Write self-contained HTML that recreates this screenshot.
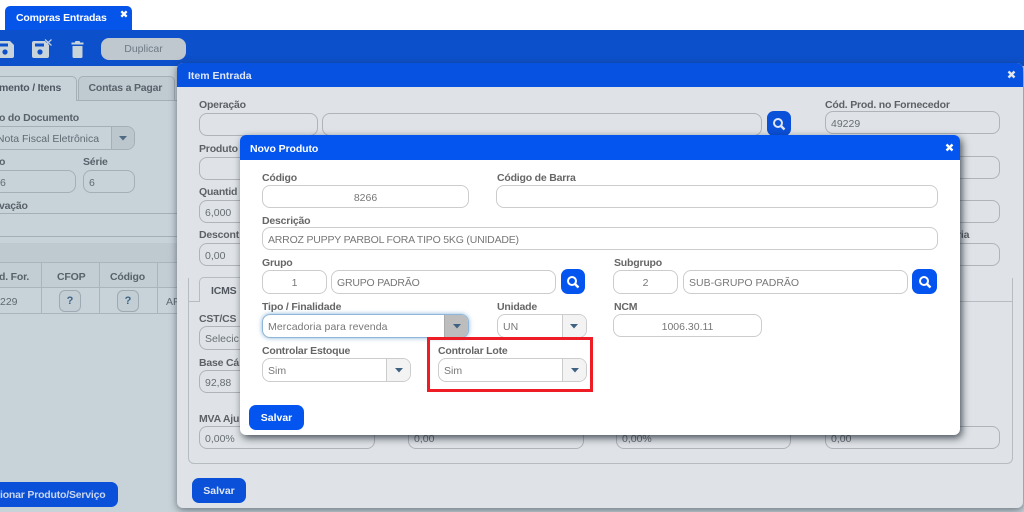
<!DOCTYPE html>
<html lang="pt"><head><meta charset="utf-8"><title>Compras Entradas</title>
<style>
*{box-sizing:border-box}
html,body{margin:0;padding:0;width:1024px;height:512px;overflow:hidden;background:#fff;font-family:"Liberation Sans",sans-serif}
div,svg{position:absolute}
#root{left:0;top:0;width:1024px;height:512px;overflow:hidden;filter:blur(.3px)}
.l{font-weight:bold;font-size:10.5px;letter-spacing:-.2px;line-height:12px;white-space:nowrap;transform:translateY(1px)}
.i{border:1px solid;border-radius:8px;font-size:10.5px;line-height:21px;padding-left:5px;padding-top:2px;white-space:nowrap;overflow:hidden}
.c{text-align:center;padding-left:0}
.a .l{color:#59626a}.a .i{border-color:#a4afb6;color:#5f6a72}
.b .l{color:#5d6166}.b .i{border-color:#aeb4b9;color:#666d73}
.n .l{color:#666}.n .i{border-color:#ccc;color:#777;background:#fff}
.t{font-size:10.5px;letter-spacing:-.2px;font-weight:bold;white-space:nowrap;text-align:center}
.btn{background:#0b50d8;color:#dfe6f5;font-weight:bold;font-size:10.5px;line-height:27px;text-align:center;border-radius:7px}
</style></head><body>
<div id="root">
<!-- top tab -->
<div style="left:5px;top:6px;width:127px;height:24px;background:#0655ea;border-radius:5px 5px 0 0"></div>
<div style="left:16px;top:12px;color:#fff;font-weight:bold;font-size:10.5px;letter-spacing:-.17px;line-height:13px">Compras Entradas</div>
<svg style="left:120px;top:10px" width="8" height="8" viewBox="0 0 9 9"><path d="M1.500 1.500L7.500 7.500M7.500 1.500L1.500 7.500" stroke="#fff" stroke-width="2.600"/></svg>
<!-- backdrop app -->
<div style="left:0;top:30px;width:1024px;height:482px;background:#c8d2d9"></div>
<div style="left:0;top:30px;width:1024px;height:36px;background:#0c50cb"></div>
<svg style="left:-4px;top:41px" width="20" height="17" viewBox="0 0 20 17"><path d="M2 0H14L18 4V15Q18 17 16 17H2Q0 17 0 15V2Q0 0 2 0Z" fill="#c9d3da"/><rect x="3" y="2.500" width="9" height="3" fill="#0c50cb"/><circle cx="9" cy="11" r="2.600" fill="#0c50cb"/></svg>
<svg style="left:32px;top:39px" width="21" height="19" viewBox="0 0 21 19"><path d="M2 2H13L17 6V17Q17 19 15 19H2Q0 19 0 17V4Q0 2 2 2Z" fill="#c9d3da"/><rect x="3" y="4.500" width="9" height="3" fill="#0c50cb"/><circle cx="8" cy="13" r="2.600" fill="#0c50cb"/><path d="M13 .5L19.500 6.500M19.500 .5L13 6.500" stroke="#c9d3da" stroke-width="1.200"/></svg>
<svg style="left:71px;top:41px" width="13" height="17" viewBox="0 0 13 17"><path d="M4 1Q4 0 5 0H8Q9 0 9 1V1.500H12.500V3.500H.5V1.500H4ZM1.500 5H11.500V15.500Q11.500 17 10 17H3Q1.500 17 1.500 15.500Z" fill="#c9d3da"/></svg>
<div style="left:101px;top:38px;width:85px;height:22px;border-radius:8px;background:#bfc8cf;color:#6f7a84;font-size:10.5px;line-height:22px;text-align:center">Duplicar</div>
<!-- left page -->
<div class="a">
<div style="left:-10px;top:76px;width:87px;height:25px;border:1px solid #a4afb6;border-bottom:0;border-radius:5px 5px 0 0;background:#c8d2d9"></div>
<div style="left:78px;top:76px;width:97px;height:25px;border:1px solid #a4afb6;border-bottom:0;border-radius:5px 5px 0 0;background:#c0cad1"></div>
<div style="left:77px;top:100px;width:100px;height:1px;background:#a4afb6"></div>
<div class="t" style="left:-1px;top:82px;color:#4e575f;line-height:13px">mento / Itens</div>
<div class="t" style="left:88.500px;top:82px;color:#59626a;line-height:13px">Contas a Pagar</div>
<div class="l" style="left:-1px;top:111px">o do Documento</div>
<div class="i" style="left:-12px;top:126px;width:147px;height:24px;padding-left:5px">&nbsp;Nota Fiscal Eletrônica<div style="left:122px;top:0;width:24px;height:22px;border-left:1px solid #a4afb6;background:#bcc6cd"></div><svg style="left:130px;top:9px" width="8" height="5"><path d="M0 0H8L4 4.500Z" fill="#4f6a82"/></svg></div>
<div class="l" style="left:-1px;top:155px">o</div>
<div class="l" style="left:83px;top:155px">Série</div>
<div class="i" style="left:-12px;top:170px;width:88px;height:23px;padding-left:11px">6</div>
<div class="i" style="left:83px;top:170px;width:52px;height:23px">6</div>
<div class="l" style="left:-1px;top:199px">vação</div>
<div style="left:0;top:213px;width:177px;height:24px;border-top:1px solid #a4afb6;border-bottom:1px solid #a4afb6"></div>
<div style="left:0;top:243px;width:177px;height:19px;background:#bfc9d0"></div>
<div style="left:0;top:262px;width:177px;height:26px;border-top:1px solid #aab4bb;border-bottom:1px solid #aab4bb;background:#c3cdd4"></div>
<div style="left:0;top:313px;width:177px;height:1px;background:#aab4bb"></div>
<div style="left:41px;top:262px;width:1px;height:51px;background:#aab4bb"></div>
<div style="left:99px;top:262px;width:1px;height:51px;background:#aab4bb"></div>
<div style="left:157px;top:262px;width:1px;height:51px;background:#aab4bb"></div>
<div class="l" style="left:-1px;top:270px">d. For.</div>
<div class="l" style="left:57px;top:270px">CFOP</div>
<div class="l" style="left:110px;top:270px">Código</div>
<div style="left:0;top:296px;color:#5f6a72;font-size:10.500px;line-height:12px">229</div>
<div style="left:166px;top:296px;color:#5f6a72;font-size:10.500px;line-height:12px">AF</div>
<div style="left:59px;top:290px;width:22px;height:22px;border:1px solid #9eaab2;border-radius:6px;background:#c3cdd4;color:#3d6587;font-weight:bold;font-size:11px;line-height:21px;text-align:center">?</div>
<div style="left:117px;top:290px;width:22px;height:22px;border:1px solid #9eaab2;border-radius:6px;background:#c3cdd4;color:#3d6587;font-weight:bold;font-size:11px;line-height:21px;text-align:center">?</div>
<div style="left:-30px;top:482px;width:148px;height:25px;background:#0b50d8;border-radius:7px"></div>
<div style="left:0;top:482px;line-height:27px;font-size:10.500px;font-weight:bold;letter-spacing:-.2px;color:#c9d6ee;white-space:nowrap">ionar Produto/Serviço</div>
</div>
<!-- Item Entrada modal -->
<div class="b" style="left:177px;top:63px;width:846px;height:445px;background:#dfe3e7;border-radius:6px;box-shadow:0 2px 8px rgba(40,50,60,.6);overflow:hidden">
<div style="left:0;top:0;width:846px;height:24px;background:#0752e0"></div>
<div class="l" style="left:11px;top:6px;color:#dfe7f7;letter-spacing:0">Item Entrada</div>
<svg style="left:830px;top:7px" width="9" height="9" viewBox="0 0 9 9"><path d="M1.500 1.500L7.500 7.500M7.500 1.500L1.500 7.500" stroke="#e4e8ee" stroke-width="2.400"/></svg>
<div class="l" style="left:22px;top:35px">Operação</div>
<div class="i" style="left:22px;top:50px;width:119px;height:23px"></div>
<div class="i" style="left:145px;top:50px;width:440px;height:23px"></div>
<div style="left:590px;top:48px;width:24px;height:25px;border-radius:7px;background:#0a50d8"></div>
<svg style="left:595px;top:54px" width="14" height="14" viewBox="0 0 14 14"><circle cx="6" cy="6" r="4" fill="none" stroke="#dfe6f5" stroke-width="2"/><path d="M9 9L12.500 12.500" stroke="#dfe6f5" stroke-width="2.400"/></svg>
<div class="l" style="left:648px;top:35px">Cód. Prod. no Fornecedor</div>
<div class="i" style="left:648px;top:48px;width:175px;height:23px">49229</div>
<div class="l" style="left:22px;top:79px">Produto</div>
<div class="i" style="left:22px;top:94px;width:119px;height:23px"></div>
<div class="i" style="left:648px;top:93px;width:175px;height:23px"></div>
<div class="l" style="left:22px;top:122px">Quantid</div>
<div class="i" style="left:22px;top:137px;width:119px;height:23px">6,000</div>
<div class="i" style="left:648px;top:137px;width:175px;height:23px"></div>
<div class="l" style="left:22px;top:165px">Descont</div>
<div class="i" style="left:22px;top:180px;width:119px;height:23px">0,00</div>
<div class="l" style="left:780px;top:165px;width:20px;overflow:visible">ria</div>
<div class="i" style="left:648px;top:180px;width:175px;height:23px"></div>
<!-- tab panel -->
<div style="left:11px;top:215px;width:825px;height:186px;border:1px solid #b6bcc1;border-top:0;border-radius:0 0 6px 6px"></div>
<div style="left:11px;top:238px;width:11px;height:1px;background:#b6bcc1"></div>
<div style="left:22px;top:214px;width:60px;height:25px;border:1px solid #b6bcc1;border-bottom:0;border-radius:5px 5px 0 0;background:#dfe3e7"></div>
<div style="left:82px;top:238px;width:754px;height:1px;background:#b6bcc1"></div>
<div class="l" style="left:34px;top:221px;color:#50575e">ICMS</div>
<div class="l" style="left:22px;top:249px">CST/CS</div>
<div class="i" style="left:22px;top:263px;width:119px;height:24px">Selecic</div>
<div class="l" style="left:22px;top:293px">Base Cá</div>
<div class="i" style="left:22px;top:307px;width:119px;height:23px">92,88</div>
<div class="l" style="left:22px;top:349px">MVA Aju</div>
<div class="i" style="left:22px;top:363px;width:176px;height:23px">0,00%</div>
<div class="i" style="left:231px;top:363px;width:176px;height:23px">0,00</div>
<div class="i" style="left:439px;top:363px;width:175px;height:23px">0,00%</div>
<div class="i" style="left:648px;top:363px;width:175px;height:23px">0,00</div>
<div class="btn" style="left:15px;top:415px;width:54px;height:25px;background:#0a50d8">Salvar</div>
</div>
<!-- Novo Produto modal -->
<div class="n" style="left:240px;top:135px;width:720px;height:300px;background:#fff;border-radius:6px;box-shadow:2px 3px 8px rgba(20,30,40,.75)">
<div style="left:0;top:0;width:720px;height:25px;background:#0455f0;border-radius:6px 6px 0 0"></div>
<div class="l" style="left:10px;top:7px;color:#fff;letter-spacing:-.1px">Novo Produto</div>
<svg style="left:705px;top:8px" width="9" height="9" viewBox="0 0 9 9"><path d="M1.500 1.500L7.500 7.500M7.500 1.500L1.500 7.500" stroke="#fff" stroke-width="2.400"/></svg>
<div class="l" style="left:22px;top:36px">Código</div>
<div class="i c" style="left:22px;top:50px;width:207px;height:23px">8266</div>
<div class="l" style="left:257px;top:36px">Código de Barra</div>
<div class="i" style="left:256px;top:50px;width:442px;height:23px"></div>
<div class="l" style="left:22px;top:79px">Descrição</div>
<div class="i" style="left:22px;top:92px;width:676px;height:23px;letter-spacing:-.2px">ARROZ PUPPY PARBOL FORA TIPO 5KG (UNIDADE)</div>
<div class="l" style="left:22px;top:121px">Grupo</div>
<div class="i c" style="left:22px;top:135px;width:65px;height:24px">1</div>
<div class="i" style="left:91px;top:135px;width:225px;height:24px;letter-spacing:-.2px">GRUPO PADRÃO</div>
<div style="left:321px;top:134px;width:24px;height:25px;border-radius:7px;background:#0455f0"></div>
<svg style="left:326px;top:140px" width="14" height="14" viewBox="0 0 14 14"><circle cx="6" cy="6" r="4" fill="none" stroke="#fff" stroke-width="2"/><path d="M9 9L12.500 12.500" stroke="#fff" stroke-width="2.400"/></svg>
<div class="l" style="left:374px;top:121px">Subgrupo</div>
<div class="i c" style="left:373px;top:135px;width:65px;height:24px">2</div>
<div class="i" style="left:443px;top:135px;width:225px;height:24px">SUB-GRUPO PADRÃO</div>
<div style="left:672px;top:134px;width:25px;height:25px;border-radius:7px;background:#0455f0"></div>
<svg style="left:678px;top:140px" width="14" height="14" viewBox="0 0 14 14"><circle cx="6" cy="6" r="4" fill="none" stroke="#fff" stroke-width="2"/><path d="M9 9L12.500 12.500" stroke="#fff" stroke-width="2.400"/></svg>
<div class="l" style="left:22px;top:165px">Tipo / Finalidade</div>
<div class="i" style="left:22px;top:179px;width:207px;height:24px;border-color:#8fb6d8;box-shadow:0 0 5px rgba(90,150,200,.7);overflow:hidden;letter-spacing:.1px">Mercadoria para revenda<div style="left:181px;top:0;width:25px;height:22px;background:#bdbdbd;border-left:1px solid #aaa"></div><svg style="left:190px;top:9px" width="8" height="5"><path d="M0 0H8L4 4.500Z" fill="#3f6282"/></svg></div>
<div class="l" style="left:257px;top:165px">Unidade</div>
<div class="i" style="left:257px;top:179px;width:90px;height:24px">UN<div style="left:64px;top:0;width:25px;height:22px;background:#f3f3f3;border-left:1px solid #ccc"></div><svg style="left:72px;top:9px" width="8" height="5"><path d="M0 0H8L4 4.500Z" fill="#3f6282"/></svg></div>
<div class="l" style="left:374px;top:165px">NCM</div>
<div class="i c" style="left:373px;top:179px;width:149px;height:23px">1006.30.11</div>
<div class="l" style="left:22px;top:209px">Controlar Estoque</div>
<div class="i" style="left:22px;top:223px;width:149px;height:24px">Sim<div style="left:123px;top:0;width:25px;height:22px;background:#f3f3f3;border-left:1px solid #ccc"></div><svg style="left:132px;top:9px" width="8" height="5"><path d="M0 0H8L4 4.500Z" fill="#3f6282"/></svg></div>
<div class="l" style="left:198px;top:209px">Controlar Lote</div>
<div class="i" style="left:198px;top:223px;width:149px;height:24px">Sim<div style="left:123px;top:0;width:25px;height:22px;background:#f3f3f3;border-left:1px solid #ccc"></div><svg style="left:132px;top:9px" width="8" height="5"><path d="M0 0H8L4 4.500Z" fill="#3f6282"/></svg></div>
<div style="left:187px;top:202px;width:166px;height:55px;border:3px solid #ee1c25"></div>
<div class="btn" style="left:9px;top:270px;width:55px;height:25px;background:#0455f0;color:#fff">Salvar</div>
</div>
</div>
</body></html>
